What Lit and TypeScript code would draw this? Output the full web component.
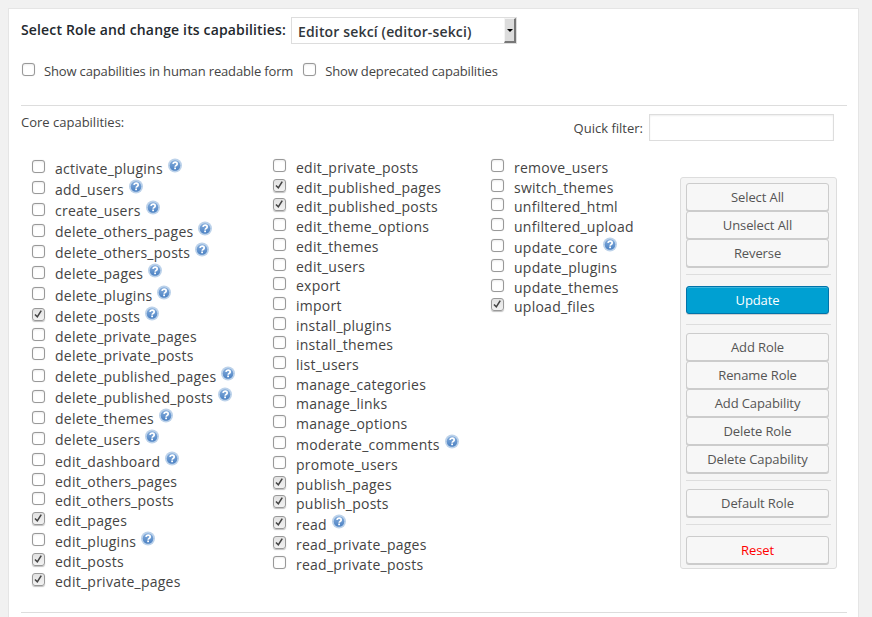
import { LitElement, html, css, svg } from "lit";
import { customElement } from "lit/decorators.js";

type Cap = [string, boolean, boolean];
const col = (s: string): Cap[] =>
  s.split(" ").map((t) => {
    const help = t.includes("?");
    const on = t.includes("*");
    return [t.replace(/[?*]/g, ""), on, help];
  });

const cols = [
  col("activate_plugins? add_users? create_users? delete_others_pages? delete_others_posts? delete_pages? delete_plugins? delete_posts*? delete_private_pages delete_private_posts delete_published_pages? delete_published_posts? delete_themes? delete_users? edit_dashboard? edit_others_pages edit_others_posts edit_pages* edit_plugins? edit_posts* edit_private_pages*"),
  col("edit_private_posts edit_published_pages* edit_published_posts* edit_theme_options edit_themes edit_users export import install_plugins install_themes list_users manage_categories manage_links manage_options moderate_comments? promote_users publish_pages* publish_posts* read*? read_private_pages* read_private_posts"),
  col("remove_users switch_themes unfiltered_html unfiltered_upload update_core? update_plugins update_themes upload_files*"),
];

const helpIcon = svg`<svg class="help" viewBox="0 0 16 16" width="16" height="16" aria-hidden="true">
  <defs><linearGradient id="hg" x1="0" y1="0" x2="0" y2="1"><stop offset="0" stop-color="#86aedd"/><stop offset="1" stop-color="#4a80c2"/></linearGradient></defs>
  <circle cx="8" cy="7.5" r="7" fill="#bcd2ea"/>
  <circle cx="8" cy="7.5" r="5.3" fill="url(#hg)"/>
  <path d="M5.9 5.9c.2-1.2 1.1-1.8 2.2-1.8 1.2 0 2.1.7 2.1 1.8 0 1.5-2 1.5-2 2.9" fill="none" stroke="#fff" stroke-width="1.7"/>
  <rect x="7.2" y="9.5" width="1.8" height="1.7" fill="#fff"/>
</svg>`;

@customElement("app-root")
export class AppRoot extends LitElement {
  static styles = css`
    :host { display: block; height: 617px; overflow: hidden; background: #f1f1f1; padding: 8px 13px 0 8px; box-sizing: border-box; font-family: "Open Sans", sans-serif; color: #444; font-size: 13px; }
    .card { background: #fff; border: 1px solid #e5e5e5; border-bottom: 0; height: 609px; box-sizing: border-box; padding: 8px 11px 0 12px; }
    .role { display: flex; align-items: flex-start; gap: 5px; height: 27px; }
    .role b { font-weight: 600; font-size: 14px; color: #23282d; letter-spacing: .15px; line-height: 26px; }
    .select { display: flex; width: 226px; height: 27px; box-sizing: border-box; border: 1px solid #ddd; background: #fff; padding: 0 0 0 6px; font-size: 14px; font-weight: 600; letter-spacing: .15px; color: #32373c; align-items: center; justify-content: space-between; }
    .select span:first-child { padding-top: 2px; }
    .arrow { width: 12px; height: 25px; background: #dcdcdc; border: 1px solid #f4f4f4; border-right: 2px solid #777; border-bottom: 2px solid #777; box-sizing: border-box; display: flex; align-items: center; justify-content: center; }
    .arrow i { border: 3px solid transparent; border-top: 3px solid #000; border-bottom: 0; }
    .opts { display: flex; margin-top: 17px; height: 20px; align-items: center; font-size: 13px; letter-spacing: -.15px; }
    .opts label { display: flex; align-items: center; }
    .opts label + label { margin-left: 9px; }
    .opts .cb { margin: -4px 9px 0 1px; }
    hr { border: 0; border-top: 1px solid #ddd; margin: 0; }
    .rule1 { margin-top: 24px; }
    .head { display: flex; justify-content: space-between; height: 43px; }
    .head > span { margin-top: 7px; line-height: 18px; }
    .filter { display: flex; align-items: center; gap: 6px; height: 27px; margin: 8px 13px 0 0; }
    .filter .input { width: 185px; height: 27px; box-sizing: border-box; border: 1px solid #ddd; background: #fff; box-shadow: inset 0 1px 2px rgba(0,0,0,.07); }
    .body { display: flex; height: 463px; padding-left: 11px; padding-top: 9px; box-sizing: border-box; }
    .col { line-height: 19.7px; font-size: 14px; letter-spacing: .25px; color: #444; }
    .col:nth-child(1) { width: 241px; }
    .col:nth-child(2) { width: 218px; }
    .col:nth-child(3) { width: 189px; }
    .row { display: block; white-space: nowrap; }
    .cb { display: inline-block; width: 13px; height: 13px; box-sizing: border-box; border: 1px solid #999; border-radius: 3px; background: #fff; box-shadow: 0 0 1px rgba(0,0,0,.2), inset 0 1px 2px rgba(0,0,0,.08); position: relative; flex: none; }
    .row .cb { margin-right: 10px; margin-bottom: 1px; vertical-align: baseline; }
    .cb.on { background: linear-gradient(#e2e2e2, #f2f2f2); border-color: #999; box-shadow: 0 1px 1px rgba(0,0,0,.25); }
    .cb svg { position: absolute; left: 0; top: 0; }
    .hwrap { display: inline-block; height: 16.4px; width: 16px; margin-left: 4px; vertical-align: baseline; }
    .help { display: block; }
    .panel { width: 157px; height: 392px; margin-top: 19px; box-sizing: border-box; background: #f5f5f5; border: 1px solid #ddd; border-radius: 3px; padding: 5px 5px 0 5px; align-self: flex-start; flex: none; }
    .btn { display: block; width: 143px; height: 28px; box-sizing: border-box; border: 1px solid #ccc; border-radius: 3px; background: #f7f7f7; box-shadow: 0 1px 0 #ccc; color: #555; font: 13px/26px "Open Sans", sans-serif; letter-spacing: -.1px; text-align: center; padding: 0; }
    .btn.blue { background: #00a0d2; border-color: #0073aa; color: #fff; box-shadow: inset 0 1px 0 rgba(120,200,230,.5), 0 1px 0 rgba(0,0,0,.15); }
    .btn.red { color: #f00; }
    .panel hr { width: 145px; }
    .panel hr.a { margin: 7px 0 11px; }
    .panel hr.b { margin: 10px 0 8px; }
    .panel hr.c { margin: 7px 0 8px; }
  `;

  private box(on: boolean) {
    return html`<span class="cb ${on ? "on" : ""}">${on
      ? html`<svg viewBox="0 0 14 14" width="11" height="11"><path d="M2.5 7l3 3 5-8" fill="none" stroke="#444" stroke-width="2"/></svg>`
      : ""}</span>`;
  }

  render() {
    const b = (t: string, c = "") => html`<button class="btn ${c}">${t}</button>`;
    return html`<div class="card">
      <div class="role"><b>Select Role and change its capabilities:</b>
        <div class="select"><span>Editor sekcí (editor-sekci)</span><span class="arrow"><i></i></span></div>
      </div>
      <div class="opts">
        <label>${this.box(false)}Show capabilities in human readable form</label>
        <label>${this.box(false)}Show deprecated capabilities</label>
      </div>
      <hr class="rule1" />
      <div class="head"><span>Core capabilities:</span>
        <div class="filter">Quick filter: <div class="input"></div></div></div>
      <div class="body">
        ${cols.map((c) => html`<div class="col">${c.map(([n, on, help]) => html`<div class="row">${this.box(on)}${n}${help ? html`<span class="hwrap">${helpIcon}</span>` : ""}</div>`)}</div>`)}
        <div class="panel">
          ${b("Select All")}${b("Unselect All")}${b("Reverse")}
          <hr class="a" />
          ${b("Update", "blue")}
          <hr class="b" />
          ${b("Add Role")}${b("Rename Role")}${b("Add Capability")}${b("Delete Role")}${b("Delete Capability")}
          <hr class="c" />
          ${b("Default Role")}
          <hr class="a" />
          ${b("Reset", "red")}
        </div>
      </div>
      <hr />
    </div>`;
  }
}
